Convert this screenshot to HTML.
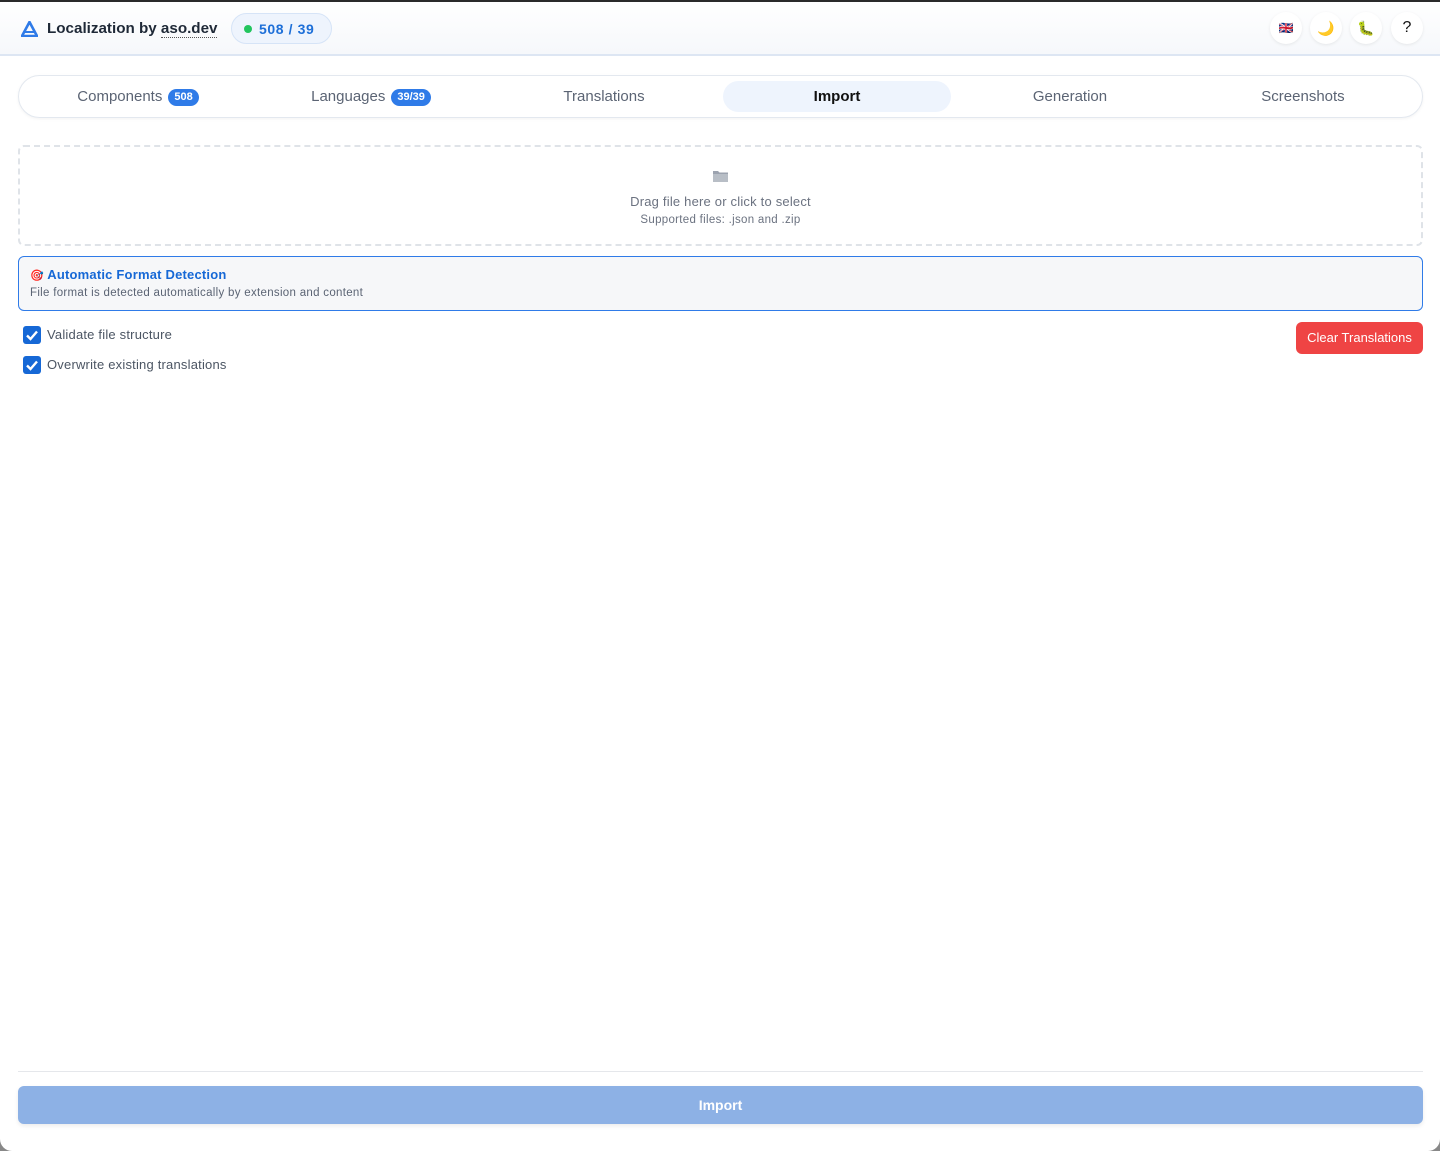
<!DOCTYPE html>
<html><head><meta charset="utf-8"><style>
*{box-sizing:border-box;margin:0;padding:0}
html,body{width:1440px;height:1151px;overflow:hidden;background:#888}
.win{position:absolute;left:0;top:0;width:1440px;height:1151px;background:#fff;border-radius:0 0 12px 12px;overflow:hidden;font-family:"Liberation Sans",sans-serif}
.topb{position:absolute;left:0;top:0;width:1440px;height:2px;background:#2a2a2a;z-index:2}
.hdr{position:absolute;left:0;top:0;width:1440px;height:56px;background:linear-gradient(#fff,#f6f8fb);border-bottom:2px solid #dde6f3}
.logo{position:absolute;left:21px;top:21px}
.title{position:absolute;left:47px;top:20px;font-size:15.2px;font-weight:bold;color:#1f2937}
.title u{text-decoration:none;border-bottom:1px dotted #555}
.pill{position:absolute;left:231px;top:13px;width:101px;height:31px;border:1px solid #d6e4f7;background:#eef4fd;border-radius:16px;font-size:14px;font-weight:bold;color:#1d6fd8;letter-spacing:.6px;padding:7px 0 0 27px}
.pill:before{content:"";position:absolute;left:12px;top:11px;width:8px;height:8px;border-radius:50%;background:#22c55e}
.ib{position:absolute;top:12px;width:32px;height:32px;border-radius:50%;background:#fff;box-shadow:0 1px 3px rgba(0,0,0,.08);text-align:center;line-height:32px;font-size:14px}
.tabs{position:absolute;left:18px;top:75px;width:1405px;height:43px;border:1px solid #e3e8ef;border-radius:22px;box-shadow:0 1px 3px rgba(0,0,0,.05)}
.tab{position:absolute;top:5px;height:31px;width:228px;text-align:center;line-height:31px;font-size:15px;color:#5b6474}
.tab.a{background:#eef4fd;border-radius:16px;color:#111;font-weight:bold}
.bd{display:inline-block;background:#2f7be8;color:#fff;font-size:11px;font-weight:bold;border-radius:9px;padding:0 6px;line-height:17px;margin-left:6px;vertical-align:1px}
.drop{position:absolute;left:18px;top:145px;width:1405px;height:101px;border:2px dashed #dfe3e8;border-radius:6px;text-align:center;color:#6b7280}
.info{position:absolute;left:18px;top:256px;width:1405px;height:55px;border:1.5px solid #2f7be8;border-radius:6px;background:#f6f7f9;padding:10px 0 0 11px}
.chk{position:absolute;left:23px;width:18px;height:18px;background:#1668d6;border-radius:3px}
.lbl{position:absolute;left:47px;font-size:13px;color:#4b5563;letter-spacing:.2px}
.clr{position:absolute;left:1296px;top:322px;width:127px;height:32px;background:#ef4444;border-radius:6px;color:#fff;font-size:13px;text-align:center;line-height:32px}
.hr{position:absolute;left:18px;top:1071px;width:1405px;height:1px;background:#e5e7eb}
.imp{position:absolute;left:18px;top:1086px;width:1405px;height:38px;background:#8db1e5;border-radius:6px;color:#fff;font-size:14px;font-weight:bold;text-align:center;line-height:38px;box-shadow:0 2px 4px rgba(0,0,0,.08)}
</style></head><body><div class="win">
<div class="topb"></div>
<div class="hdr">
<svg class="logo" width="17" height="16" viewBox="0 0 17 16"><path d="M8.5 1L1 15h15z" fill="none" stroke="#2f7be8" stroke-width="2.6" stroke-linejoin="round"/><path d="M4 11h9" stroke="#2f7be8" stroke-width="2"/></svg>
<div class="title">Localization by <u>aso.dev</u></div>
<div class="pill">508 / 39</div>
<div class="ib" style="left:1270px;font-size:12px">🇬🇧</div>
<div class="ib" style="left:1310px">🌙</div>
<div class="ib" style="left:1350px">🐛</div>
<div class="ib" style="left:1391px;font-size:16px;color:#111">?</div>
</div>
<div class="tabs">
<div class="tab" style="left:5px">Components<span class="bd">508</span></div>
<div class="tab" style="left:238px">Languages<span class="bd">39/39</span></div>
<div class="tab" style="left:471px">Translations</div>
<div class="tab a" style="left:704px">Import</div>
<div class="tab" style="left:937px">Generation</div>
<div class="tab" style="left:1170px">Screenshots</div>
</div>
<div class="drop">
<svg style="margin-top:21px" width="17" height="15" viewBox="0 0 17 15"><path d="M1 3h5l1.5 1.5H16V14H1z" fill="#9ca3af"/><path d="M1 6h15v8H1z" fill="#b8bec6"/></svg>
<div style="font-size:13px;margin-top:6px;letter-spacing:.2px">Drag file here or click to select</div>
<div style="font-size:11.5px;margin-top:5px;letter-spacing:.3px">Supported files: .json and .zip</div>
</div>
<div class="info">
<div style="font-size:13px;font-weight:bold;color:#1668d6;letter-spacing:.2px"><span style="font-size:11px">🎯</span> Automatic Format Detection</div>
<div style="font-size:11.5px;color:#5b6474;margin-top:5px;letter-spacing:.3px">File format is detected automatically by extension and content</div>
</div>
<div class="chk" style="top:326px"><svg width="18" height="18"><path d="M4 9.5l3.5 3.5L14 5.5" fill="none" stroke="#fff" stroke-width="2.4"/></svg></div>
<div class="lbl" style="top:327px">Validate file structure</div>
<div class="chk" style="top:356px"><svg width="18" height="18"><path d="M4 9.5l3.5 3.5L14 5.5" fill="none" stroke="#fff" stroke-width="2.4"/></svg></div>
<div class="lbl" style="top:357px">Overwrite existing translations</div>
<div class="clr">Clear Translations</div>
<div class="hr"></div>
<div class="imp">Import</div>
</div></body></html>
